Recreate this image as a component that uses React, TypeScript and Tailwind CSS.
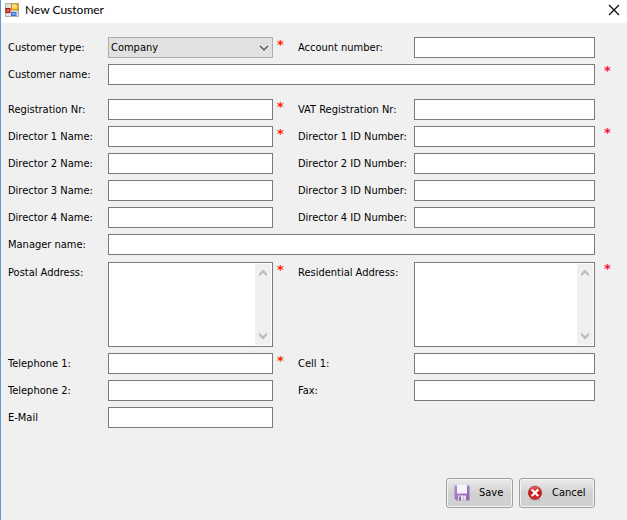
import type { ReactNode } from 'react';

const LABEL = 'h-[21px] leading-[21px] whitespace-nowrap';
const INPUT =
  'block h-[21px] w-full rounded-none border border-[#7a7a7a] bg-white px-[2px] text-[11px] outline-none focus:border-[#0078d7]';

function Star({ side }: { side: 'left' | 'right' }) {
  return (
    <span
      aria-hidden="true"
      className={
        side === 'left'
          ? 'h-[21px] pl-1 font-[family-name:DejaVu_Sans,sans-serif] text-[13px] leading-[16px] font-bold text-[#ff2400]'
          : 'h-[21px] pl-[9px] font-[family-name:DejaVu_Sans,sans-serif] text-[13px] leading-[14px] font-bold text-[#f5103c]'
      }
    >
      *
    </span>
  );
}

function Row({ children }: { children: ReactNode }) {
  return (
    <div className="grid grid-cols-[100px_minmax(0,165fr)_25px_116px_minmax(0,181fr)_32px]">
      {children}
    </div>
  );
}

type FieldProps = { id: string; label: string; required?: boolean; side: 'left' | 'right' };

function Field({ id, label, required, side }: FieldProps) {
  return (
    <>
      <label htmlFor={id} className={LABEL}>{label}</label>
      <input id={id} type="text" required={required} className={INPUT} />
      {required ? <Star side={side} /> : <span />}
    </>
  );
}

function WideField({ id, label, required }: { id: string; label: string; required?: boolean }) {
  return (
    <Row>
      <label htmlFor={id} className={LABEL}>{label}</label>
      <input id={id} type="text" required={required} className={`${INPUT} col-span-4`} />
      {required ? <Star side="right" /> : <span />}
    </Row>
  );
}

function AreaField({ id, label, side }: { id: string; label: string; side: 'left' | 'right' }) {
  return (
    <>
      <label htmlFor={id} className={LABEL}>{label}</label>
      <div className="flex h-[85px] border border-[#7a7a7a] bg-white p-px">
        <textarea
          id={id}
          required
          className="min-w-0 flex-1 resize-none overflow-hidden bg-white px-px text-[11px] outline-none"
        />
        <div aria-hidden="true" className="flex w-4 flex-col items-center justify-between bg-[#f0f0f0] py-[5px]">
          <svg width="8" height="8" viewBox="0 0 8 8" fill="#bdbdbd">
            <path d="M0 4.5 4 0.5 8 4.5V7.5L4 4 0 7.5z" />
          </svg>
          <svg width="8" height="8" viewBox="0 0 8 8" fill="#bdbdbd">
            <path d="M0 3.5 4 7.5 8 3.5V0.5L4 4 0 0.5z" />
          </svg>
        </div>
      </div>
      <Star side={side} />
    </>
  );
}

function FormIcon() {
  return (
    <svg width="14" height="14" viewBox="0 0 14 14" aria-hidden="true">
      <rect x="0.5" y="0.5" width="13" height="13" fill="#e0e0e0" stroke="#b0b0b0" />
      <rect x="6.5" y="1" width="6.5" height="6" fill="#fcc63c" stroke="#c08a10" />
      <rect x="7" y="1.5" width="4.5" height="3" fill="#ffe583" />
      <rect x="1" y="5.5" width="4" height="4" fill="#d03830" stroke="#a3170f" />
      <rect x="2" y="6.5" width="2" height="2" fill="#f08070" />
      <rect x="6.5" y="9.5" width="4.5" height="3" fill="#6fa4ec" stroke="#3d70cc" />
    </svg>
  );
}

function SaveIcon() {
  return (
    <svg width="16" height="16" viewBox="0 0 16 16" aria-hidden="true">
      <defs>
        <linearGradient id="disk" x1="0" y1="0" x2="1" y2="1">
          <stop offset="0" stopColor="#a68cc8" />
          <stop offset="1" stopColor="#9562b4" />
        </linearGradient>
      </defs>
      <path d="M0.5 0.5h15v15h-13l-2-2z" fill="url(#disk)" />
      <rect x="3" y="0" width="10" height="8" fill="#f5f4fa" />
      <rect x="3" y="8" width="10" height="1" fill="#c9b6dc" />
      <rect x="4" y="10.5" width="8" height="5" fill="#e6e0ea" />
      <rect x="5" y="11.5" width="2" height="4" fill="#8a6aa4" />
      <rect x="9" y="11.5" width="1" height="4" fill="#c7bccf" />
    </svg>
  );
}

function CancelIcon() {
  return (
    <svg width="16" height="16" viewBox="0 0 16 16" aria-hidden="true">
      <defs>
        <linearGradient id="ball" x1="0" y1="0" x2="0" y2="1">
          <stop offset="0" stopColor="#e0706c" />
          <stop offset="0.5" stopColor="#c4161a" />
          <stop offset="1" stopColor="#d82a28" />
        </linearGradient>
      </defs>
      <ellipse cx="8" cy="14.5" rx="6" ry="1.3" fill="#aaa" opacity="0.6" />
      <circle cx="8" cy="7.8" r="6.7" fill="url(#ball)" stroke="#b01c1c" strokeWidth="0.6" />
      <path d="M5.5 5.3 10.5 10.3M10.5 5.3 5.5 10.3" stroke="#fff" strokeWidth="2.2" strokeLinecap="square" />
    </svg>
  );
}

const BUTTON =
  'flex h-[30px] items-center rounded-[3px] border border-[#a0a0a0] bg-linear-to-b from-[#ececec] via-[#d2d2d2] via-50% to-[#d0d0d0] pl-[7px] shadow-[inset_0_0_0_1px_#f4f4f4]';

export default function App() {
  return (
    <main className="flex min-h-screen flex-col border-l border-[#5b9bd5] bg-[#f0f0f0] font-['DejaVu_Sans_Condensed','DejaVu_Sans',sans-serif] text-[11px] text-black">
      <header className="flex h-[23px] items-center bg-white pr-[7px] pb-[3px] pl-1">
        <FormIcon />
        <h1 className="ml-[6px] flex-1 font-[family-name:Lato,sans-serif] text-[12px] leading-[20px]">
          New Customer
        </h1>
        <button type="button" aria-label="Close" className="flex">
          <svg width="12" height="12" viewBox="0 0 12 12" fill="none" stroke="#000" strokeWidth="1.1">
            <path d="M1 1 11 11M11 1 1 11" />
          </svg>
        </button>
      </header>

      <form className="flex flex-col gap-1.5 pt-3.5 pl-[7px]" onSubmit={(e) => e.preventDefault()}>
        <Row>
          <label htmlFor="type" className={LABEL}>Customer type:</label>
          <div className="relative">
            <select
              id="type"
              required
              className="block h-[21px] w-full appearance-none rounded-none border border-[#adadad] bg-[#e1e1e1] pt-[2px] pl-[2px] text-[11px] outline-none"
            >
              <option>Company</option>
              <option>Individual</option>
            </select>
            <svg
              aria-hidden="true"
              className="pointer-events-none absolute top-[8px] right-[4px]"
              width="10" height="6" viewBox="0 0 10 6" fill="none" stroke="#404040" strokeWidth="1.2"
            >
              <path d="M1 0.8 5 4.8 9 0.8" />
            </svg>
          </div>
          <Star side="left" />
          <Field id="account" label="Account number:" side="right" />
        </Row>
        <WideField id="name" label="Customer name:" required />

        <div className="mt-2 flex flex-col gap-1.5">
          <Row>
            <Field id="reg" label="Registration Nr:" required side="left" />
            <Field id="vat" label="VAT Registration Nr:" side="right" />
          </Row>
          {[1, 2, 3, 4].map((n) => (
            <Row key={n}>
              <Field id={`director-${n}`} label={`Director ${n} Name:`} required={n === 1} side="left" />
              <Field id={`director-id-${n}`} label={`Director ${n} ID Number:`} required={n === 1} side="right" />
            </Row>
          ))}
          <WideField id="manager" label="Manager name:" />
        </div>

        <div className="mt-px flex flex-col gap-1.5">
          <Row>
            <AreaField id="postal" label="Postal Address:" side="left" />
            <AreaField id="residential" label="Residential Address:" side="right" />
          </Row>
          <Row>
            <Field id="tel-1" label="Telephone 1:" required side="left" />
            <Field id="cell" label="Cell 1:" side="right" />
          </Row>
          <Row>
            <Field id="tel-2" label="Telephone 2:" side="left" />
            <Field id="fax" label="Fax:" side="right" />
          </Row>
          <Row>
            <Field id="email" label="E-Mail" side="left" />
          </Row>
        </div>

        <div className="mt-11 flex justify-end gap-1.5 pr-8 pb-3">
          <button type="submit" className={`${BUTTON} w-[67px] gap-[9px]`}>
            <SaveIcon />
            Save
          </button>
          <button type="button" className={`${BUTTON} w-[76px] gap-[9px]`}>
            <CancelIcon />
            Cancel
          </button>
        </div>
      </form>
    </main>
  );
}
